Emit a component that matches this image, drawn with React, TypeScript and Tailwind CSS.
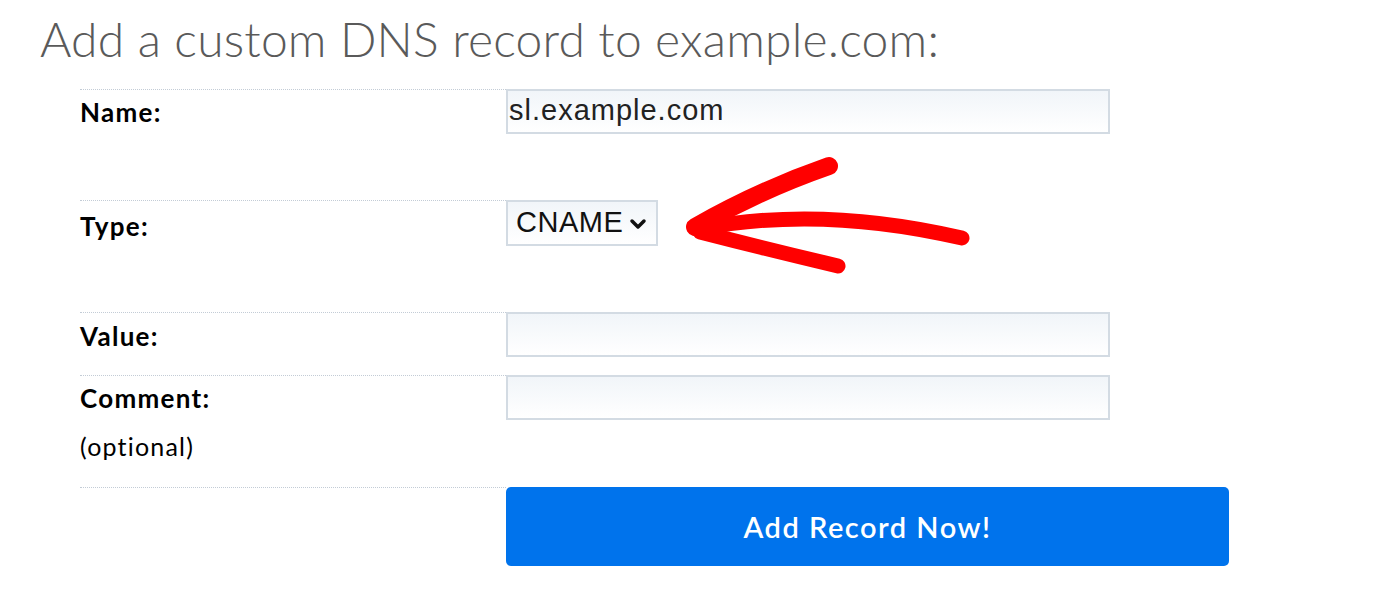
import React from 'react';

const labelFont = { fontFamily: 'Lato, "Open Sans", sans-serif' };
const inputFont = { fontFamily: '"Liberation Sans", Arial, sans-serif' };

const Row = ({ label, extra, h, pt = 'pt-[10px]', children }: { label: string; extra?: string; h: string; pt?: string; children: React.ReactNode }) => (
  <div className={`flex ${h}`}>
    <div className={`w-[426px] border-t border-dotted border-[#c3ccd6] ${pt}`}>
      <div className="text-[26px] font-bold text-black leading-[24px] tracking-[1.3px]" style={labelFont}>{label}</div>
      {extra && <div className="text-[25px] text-black leading-[24px] mt-[24px] tracking-[1.2px]" style={labelFont}>{extra}</div>}
    </div>
    <div className="flex-1">{children}</div>
  </div>
);

const Field = ({ value = '' }: { value?: string }) => (
  <div
    className="w-[604px] h-[45px] border-2 border-[#d3dbe3] bg-gradient-to-b from-[#f1f5f9] to-white px-[1px] text-[29px] leading-[38px] tracking-[1px] text-[#222]"
    style={inputFont}
  >
    {value}
  </div>
);

export default function App() {
  return (
    <div className="relative w-[1400px] h-[605px] bg-white overflow-hidden">
      <h1
        className="pl-[40px] pt-[7px] text-[48px] font-light text-[#5a5a5a] leading-[64px] tracking-[0.2px]"
        style={labelFont}
      >
        Add a custom DNS record to example.com:
      </h1>
      <div className="pl-[80px] mt-[18px]">
        <Row label="Name:" h="h-[111px]">
          <Field value="sl.example.com" />
        </Row>
        <Row label="Type:" h="h-[112px]" pt="pt-[13px]">
          <div
            className="w-[152px] h-[46px] border-2 border-[#d3dbe3] bg-gradient-to-b from-[#f1f5f9] to-white flex items-center pl-[8px] gap-[6px] text-[29px] tracking-[0.5px] text-[#111]"
            style={inputFont}
          >
            <span>CNAME</span>
            <svg width="18" height="12" viewBox="0 0 18 12" className="mt-[2px]">
              <polyline points="3,3 9,9 15,3" fill="none" stroke="#111" strokeWidth="3.5" strokeLinecap="round" strokeLinejoin="round" />
            </svg>
          </div>
        </Row>
        <Row label="Value:" h="h-[63px]" pt="pt-[11px]">
          <Field />
        </Row>
        <Row label="Comment:" extra="(optional)" h="h-[112px]">
          <Field />
        </Row>
        <div className="flex">
          <div className="w-[426px] border-t border-dotted border-[#c3ccd6]" />
          <button
            className="w-[723px] h-[79px] rounded-[5px] bg-[#0073ec] text-white text-[29px] font-semibold tracking-[1.5px]"
            style={labelFont}
          >
            Add Record Now!
          </button>
        </div>
      </div>
      <svg className="absolute left-0 top-0 pointer-events-none" width="1400" height="605" viewBox="0 0 1400 605">
        <g fill="none" stroke="#ff0000" strokeLinecap="round" strokeLinejoin="round">
          <path d="M829 166 Q760 190 695 227" strokeWidth="18" />
          <path d="M698 229 Q820 205 962 238" strokeWidth="15" />
          <path d="M700 232 Q770 250 838 266" strokeWidth="15" />
        </g>
      </svg>
    </div>
  );
}
